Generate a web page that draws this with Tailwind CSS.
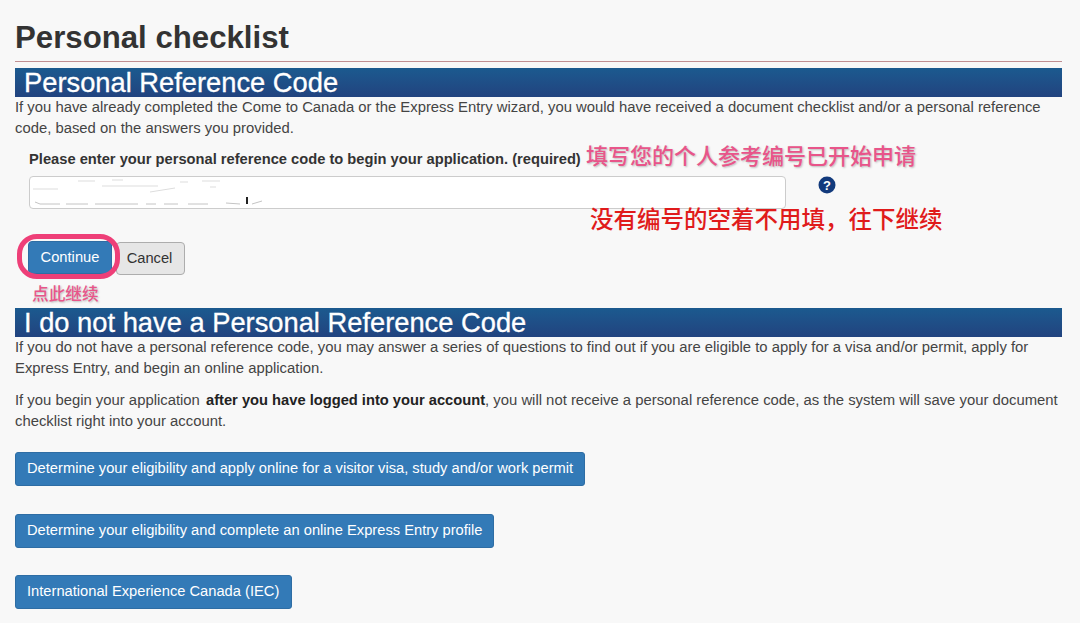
<!DOCTYPE html>
<html lang="en">
<head>
    <meta charset="UTF-8">
    <meta name="viewport" content="width=device-width, initial-scale=1.0">
    <title>Personal checklist</title>
    <script src="https://cdn.jsdelivr.net/npm/@tailwindcss/browser@4"></script>
</head>
<body class="bg-[#f8f8f8] font-['Liberation_Sans','Noto_Sans_CJK_SC',sans-serif] text-[#333]">
    <div class="relative w-[1080px] h-[623px] overflow-hidden pl-[15px] pr-[18px]">
        <h1 class="pt-[20px] h-[61px] text-[31.2px] leading-[36px] font-bold text-[#333]">Personal checklist</h1>
        <div class="h-px bg-[#c08f92]"></div>

        <!-- Reference code -->
        <h2 class="mt-[6px] h-[29px] pl-[9px] bg-gradient-to-b from-[#1b5a8f] to-[#21437f] text-white text-[27.3px] leading-[30px] [-webkit-text-stroke:0.3px_#fff]">Personal Reference Code</h2>
        <p class="text-[14.85px] leading-[21px] text-[#444]">If you have already completed the Come to Canada or the Express Entry wizard, you would have received a document checklist and/or a personal reference code, based on the answers you provided.</p>

        <div class="pl-[14px] mt-[10px]">
            <label class="block h-[27px] text-[14.7px] leading-[21px] font-bold">Please enter your personal reference code to begin your application. <span>(required)</span></label>
            <div class="flex items-start">
                <div class="w-[757px] h-[33px] bg-white border border-[#ccc] rounded-[4px]">
                    <svg class="blur-[0.5px]" width="240" height="31" viewBox="0 0 240 31" fill="none" stroke="#ddd" stroke-width="1">
                        <path d="M3 12H28M48 4H65M72 9H128M82 3H93M120 15L145 11M150 5H158M172 4H190M180 10H186"/>
                        <path d="M5 25L10 27H30M36 27H58M65 27H108M116 27H126M134 27H148M158 27H178M196 26L210 27M222 27L232 24" stroke="#c4c4c4"/>
                        <path d="M217 20V27" stroke="#222" stroke-width="2"/>
                    </svg>
                </div>
                <svg class="ml-[32px]" width="18" height="18" viewBox="0 0 18 18"><circle cx="9" cy="9" r="8.5" fill="#123a7c"/><text x="9" y="13.5" text-anchor="middle" font-size="13" font-weight="700" fill="#fff" font-family="Liberation Sans">?</text></svg>
            </div>
            <div class="flex items-start mt-[32px] -ml-px gap-[4px]">
                <button class="h-[33px] w-[84px] bg-[#337ab7] border border-[#2e6da4] rounded-[4px] text-white text-[14.7px]">Continue</button>
                <button class="mt-px h-[33px] w-[69px] pr-[2px] bg-[#e6e6e6] border border-[#adadad] rounded-[4px] text-[#333] text-[14.7px]">Cancel</button>
            </div>
        </div>

        <!-- No reference code -->
        <h2 class="mt-[33px] h-[29px] pl-[9px] bg-gradient-to-b from-[#1b5a8f] to-[#21437f] text-white text-[27.3px] leading-[30px] [-webkit-text-stroke:0.3px_#fff]">I do not have a Personal Reference Code</h2>
        <p class="text-[14.85px] leading-[21px] text-[#444]">If you do not have a personal reference code, you may answer a series of questions to find out if you are eligible to apply for a visa and/or permit, apply for Express Entry, and begin an online application.</p>
        <p class="mt-[11px] text-[14.85px] leading-[21px] text-[#444]">If you begin your application <b class="ml-[2px] text-[14.7px] text-[#222]">after you have logged into your account</b>, you will not receive a personal reference code, as the system will save your document checklist right into your account.</p>

        <div class="mt-[20px] flex flex-col items-start">
            <a class="h-[34px] w-[570px] pl-[11px] leading-[31px] bg-[#337ab7] border border-[#2e6da4] rounded-[3px] text-white text-[14.7px]">Determine your eligibility and apply online for a visitor visa, study and/or work permit</a>
            <a class="mt-[28px] h-[34px] w-[479px] pl-[11px] leading-[31px] bg-[#337ab7] border border-[#2e6da4] rounded-[3px] text-white text-[14.7px]">Determine your eligibility and complete an online Express Entry profile</a>
            <a class="mt-[27px] h-[34px] w-[277px] pl-[11px] leading-[31px] bg-[#337ab7] border border-[#2e6da4] rounded-[3px] text-white text-[14.7px]">International Experience Canada (IEC)</a>
        </div>

        <!-- Annotations over the page -->
        <div class="absolute left-[586px] top-[144px] text-[22px] leading-[26px] font-medium whitespace-nowrap text-[#e8558a] [text-shadow:1px_1px_2px_#bbb]">填写您的个人参考编号已开始申请</div>
        <div class="absolute left-[590px] top-[206px] text-[23.5px] leading-[28px] font-medium whitespace-nowrap text-[#e01b1b]">没有编号的空着不用填&#65292;往下继续</div>
        <div class="absolute left-[17px] top-[234px] w-[103px] h-[45px] border-[5px] border-[#ee3f78] rounded-[20px]"></div>
        <div class="absolute left-[32px] top-[285px] text-[16.7px] leading-[20px] font-medium whitespace-nowrap text-[#e8558a] [text-shadow:1px_1px_2px_#bbb]">点此继续</div>
    </div>
</body>
</html>
